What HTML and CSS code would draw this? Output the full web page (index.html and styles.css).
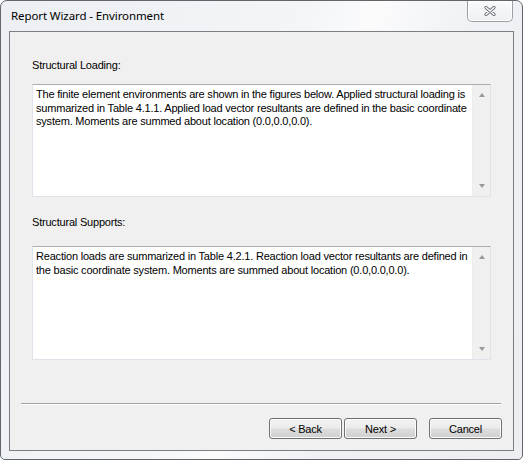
FILE: index.html
```html
<!DOCTYPE html>
<html lang="en">
<head>
    <meta charset="UTF-8">
    <title>Report Wizard - Environment</title>
    <link rel="stylesheet" href="styles.css">
</head>
<body>
    <!-- Janela do assistente -->
    <div class="window">
        <div class="titlebar">
            <span class="title">Report Wizard - Environment</span>
            <div class="close">
                <svg width="12" height="10" viewBox="0 0 12 10">
                    <path d="M2 1.5 L10 8.5 M10 1.5 L2 8.5" stroke="#6b727a" stroke-width="3.2" stroke-linecap="round"/>
                    <path d="M2 1.5 L10 8.5 M10 1.5 L2 8.5" stroke="#ffffff" stroke-width="1.4" stroke-linecap="round"/>
                </svg>
            </div>
        </div>

        <div class="client">
            <div class="label">Structural Loading:</div>
            <div class="textbox box1">
                <div class="text">
                    The finite element environments are shown in the figures below. Applied structural loading is<br>
                    summarized in Table 4.1.1. Applied load vector resultants are defined in the basic coordinate<br>
                    system. Moments are summed about location (0.0,0.0,0.0).
                </div>
                <div class="scrollbar"><span class="up"></span><span class="down"></span></div>
            </div>

            <div class="label label2">Structural Supports:</div>
            <div class="textbox box2">
                <div class="text">
                    Reaction loads are summarized in Table 4.2.1. Reaction load vector resultants are defined in<br>
                    the basic coordinate system. Moments are summed about location (0.0,0.0,0.0).
                </div>
                <div class="scrollbar"><span class="up"></span><span class="down"></span></div>
            </div>

            <div class="separator"></div>

            <div class="buttons">
                <button class="btn">&lt; Back</button>
                <button class="btn">Next &gt;</button>
                <button class="btn cancel">Cancel</button>
            </div>
        </div>
    </div>
</body>
</html>
```

FILE: styles.css
```css
/* Janela estilo Windows 7 */
body { margin: 0; background: #ffffff; font-family: "Liberation Sans", Arial, sans-serif; font-size: 11px; letter-spacing: -0.2px; color: #000; }

.window {
    width: 523px; height: 460px; box-sizing: border-box;
    border: 1px solid #62666b; border-radius: 7px 7px 5px 5px;
    background: linear-gradient(110deg, #eceff3 0%, #f3f5f7 45%, #fbfbfc 55%, #eff1f4 70%, #eceef1 100%);
    padding: 0 8px 8px 8px;
    display: flex; flex-direction: column;
}

.titlebar { height: 30px; display: flex; align-items: flex-start; justify-content: space-between; }
.title { font-family: "Noto Sans", sans-serif; font-size: 11.5px; letter-spacing: -0.1px; margin: 7px 0 0 2px; color: #000; }
.close {
    width: 46px; height: 21px; margin-right: 1px; box-sizing: border-box;
    border: 1px solid #9aa0a7; border-top: none; border-radius: 0 0 5px 5px;
    background: linear-gradient(#f9fafb, #eef0f3);
    box-shadow: inset 0 0 0 1px #ffffff;
    display: flex; align-items: center; justify-content: center;
}

.client {
    flex: 1; border: 1px solid #7b7f84; background: #f0f0f0;
    padding: 27px 22px 0 22px;
    display: flex; flex-direction: column;
}

.label { height: 13px; line-height: 13px; }
.label2 { margin-top: 19px; }

.textbox {
    margin-top: 12px; width: 459px; box-sizing: border-box;
    border: 1px solid #e2e3ea; border-top-color: #abadb3;
    background: #fff; display: flex;
}
.box1 { height: 113px; }
.box2 { height: 114px; margin-top: 17px; }
.text { flex: 1; padding: 3px 3px; line-height: 13.5px; white-space: nowrap; }

.scrollbar {
    width: 17px; background: #f0f0f0; border-left: 1px solid #ececec;
    display: flex; flex-direction: column; justify-content: space-between; align-items: center;
    padding: 8px 0;
}
.up, .down { width: 0; height: 0; border-left: 3.5px solid transparent; border-right: 3.5px solid transparent; }
.up { border-bottom: 4px solid #9a9a9a; }
.down { border-top: 4px solid #9a9a9a; }

.separator { margin: 43px -10px 0 -11px; height: 1px; background: #a0a0a0; border-bottom: 1px solid #ffffff; }

.buttons { display: flex; justify-content: flex-end; gap: 2px; margin: 13px -11px 0 0; }
.btn {
    width: 73px; height: 21px; box-sizing: border-box;
    border: 1px solid #707070; border-radius: 3px;
    background: linear-gradient(#f2f2f2 0%, #ebebeb 48%, #dddddd 52%, #cfcfcf 100%);
    box-shadow: inset 0 0 0 1px #fcfcfc;
    font-family: "Liberation Sans", Arial, sans-serif; font-size: 11px; letter-spacing: -0.2px; color: #000; padding: 0;
}
.cancel { margin-left: 10px; }
```
